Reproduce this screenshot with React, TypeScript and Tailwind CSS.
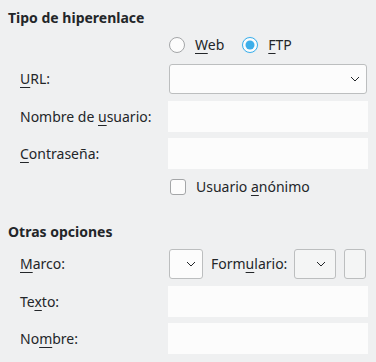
import React from "react";

const Chevron = () => (
  <svg width="10" height="6" viewBox="0 0 10 6" className="shrink-0">
    <path d="M1 1l4 4 4-4" fill="none" stroke="#232629" strokeWidth="1" />
  </svg>
);

const Radio = ({ checked }: { checked?: boolean }) =>
  checked ? (
    <svg width="18" height="18" viewBox="0 0 18 18" className="shrink-0">
      <circle cx="9" cy="9" r="8.5" fill="#d6ecf8" />
      <circle cx="9" cy="9" r="7.5" fill="#fcfcfc" stroke="#3daee9" strokeWidth="1" />
      <circle cx="9" cy="9" r="4.5" fill="#3daee9" />
    </svg>
  ) : (
    <svg width="18" height="18" viewBox="0 0 18 18" className="shrink-0">
      <circle cx="9" cy="9" r="7.5" fill="#fcfcfc" stroke="#a4a6a8" strokeWidth="1" />
    </svg>
  );

const Label = ({ children }: { children: React.ReactNode }) => (
  <div className="w-[168px] shrink-0 pl-5">{children}</div>
);

const Mn = ({ children }: { children: React.ReactNode }) => (
  <span className="underline underline-offset-[3px] decoration-1">{children}</span>
);

const Field = () => <div className="w-[200px] h-[31px] bg-[#fcfcfc]" />;

export default function App() {
  return (
    <div
      className="w-[376px] h-[362px] bg-[#eff0f1] text-[#232629] text-[14px] leading-5 overflow-hidden"
      style={{ fontFamily: '"Noto Sans", sans-serif' }}
    >
      <div className="pt-2 pl-2 font-bold">Tipo de hiperenlace</div>

      <div className="mt-[8px] flex items-center h-[18px] pl-[168px]">
        <Radio />
        <span className="ml-[9px]">
          <Mn>W</Mn>eb
        </span>
        <span className="ml-[17px]">
          <Radio checked />
        </span>
        <span className="ml-[9px]">
          <Mn>F</Mn>TP
        </span>
      </div>

      <div className="mt-[10px] flex items-center h-[30px]">
        <Label>
          <Mn>U</Mn>RL:
        </Label>
        <div className="ml-px w-[198px] h-[30px] bg-[#fcfcfc] border border-[#bcbebf] rounded-[3px] flex items-center justify-end pr-[6px]">
          <Chevron />
        </div>
      </div>

      <div className="mt-[7px] flex items-center">
        <Label>
          Nombre de <Mn>u</Mn>suario:
        </Label>
        <Field />
      </div>

      <div className="mt-[6px] flex items-center">
        <Label>
          <Mn>C</Mn>ontraseña:
        </Label>
        <Field />
      </div>

      <div className="mt-[10px] flex items-center h-4 pl-[170px]">
        <div className="w-4 h-4 rounded-[3px] border border-[#a4a6a8] bg-[#fcfcfc] shrink-0" />
        <span className="ml-[10px]">
          Usuario <Mn>a</Mn>nónimo
        </span>
      </div>

      <div className="mt-[27px] pl-2 font-bold">Otras opciones</div>

      <div className="mt-[7px] flex items-center h-[30px]">
        <Label>
          <Mn>M</Mn>arco:
        </Label>
        <div className="ml-px w-[34px] h-[30px] bg-[#fcfcfc] border border-[#bcbebf] rounded-[3px] flex items-center justify-end pr-[6px]">
          <Chevron />
        </div>
        <span className="ml-[8px]">
          Form<Mn>u</Mn>lario:
        </span>
        <div className="ml-[7px] w-[42px] h-[30px] bg-[#f4f5f5] border border-[#bcbebf] rounded-[3px] flex items-center justify-end pr-[9px]">
          <Chevron />
        </div>
        <div className="ml-[8px] w-[22px] h-[30px] bg-[#f4f5f5] border border-[#bcbebf] rounded-[3px]" />
      </div>

      <div className="mt-[7px] flex items-center">
        <Label>
          Te<Mn>x</Mn>to:
        </Label>
        <Field />
      </div>

      <div className="mt-[6px] flex items-center">
        <Label>
          No<Mn>m</Mn>bre:
        </Label>
        <Field />
      </div>
    </div>
  );
}
